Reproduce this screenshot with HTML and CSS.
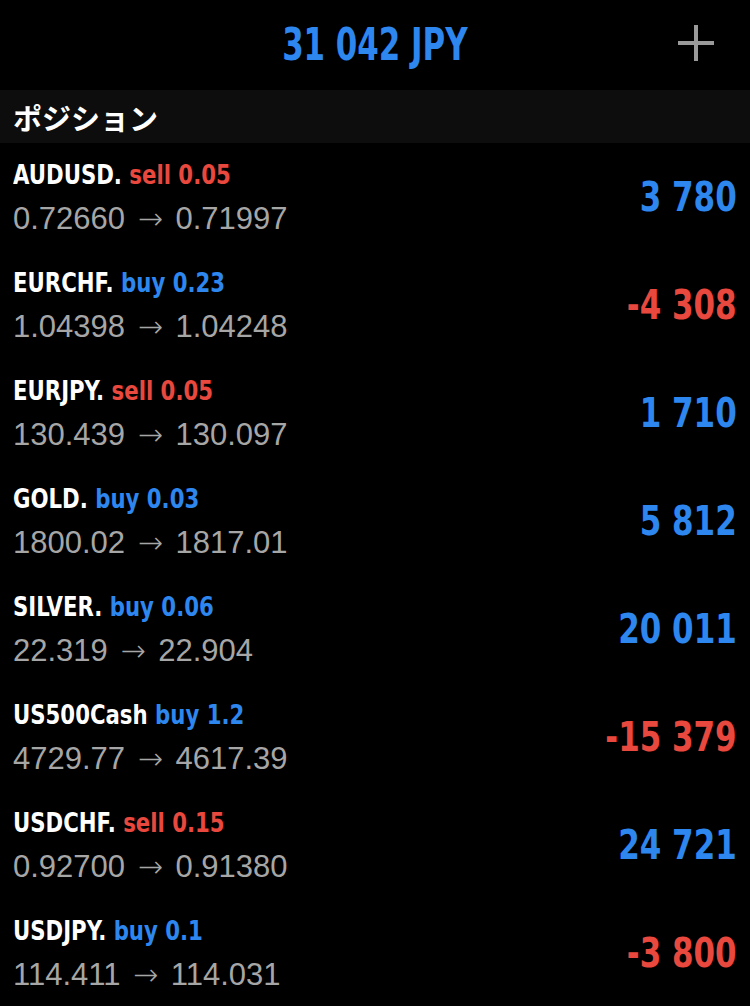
FILE: index.html
```html
<!DOCTYPE html>
<html lang="ja">
<head>
    <meta charset="UTF-8">
    <meta name="viewport" content="width=device-width, initial-scale=1.0">
    <title>ポジション</title>
    <link rel="stylesheet" href="styles.css">
</head>
<body>

    <div class="top-bar">
        <div class="balance">31 042 JPY</div>
        <button class="add-btn" aria-label="追加">
            <svg width="36" height="36" viewBox="0 0 36 36">
                <path d="M18 0 V36 M0 18 H36" stroke="#9a9a9a" stroke-width="4" fill="none"/>
            </svg>
        </button>
    </div>

    <div class="section-title">ポジション</div>

    <div class="positions">
        <div class="row">
            <div class="info">
                <div class="symbol"><span class="narrow">AUDUSD. <span class="sell">sell 0.05</span></span></div>
                <div class="prices">0.72660 <span class="arrow">→</span> 0.71997</div>
            </div>
            <div class="profit plus">3 780</div>
        </div>
        <div class="row">
            <div class="info">
                <div class="symbol"><span class="narrow">EURCHF. <span class="buy">buy 0.23</span></span></div>
                <div class="prices">1.04398 <span class="arrow">→</span> 1.04248</div>
            </div>
            <div class="profit minus">-4 308</div>
        </div>
        <div class="row">
            <div class="info">
                <div class="symbol"><span class="narrow">EURJPY. <span class="sell">sell 0.05</span></span></div>
                <div class="prices">130.439 <span class="arrow">→</span> 130.097</div>
            </div>
            <div class="profit plus">1 710</div>
        </div>
        <div class="row">
            <div class="info">
                <div class="symbol"><span class="narrow">GOLD. <span class="buy">buy 0.03</span></span></div>
                <div class="prices">1800.02 <span class="arrow">→</span> 1817.01</div>
            </div>
            <div class="profit plus">5 812</div>
        </div>
        <div class="row">
            <div class="info">
                <div class="symbol"><span class="narrow">SILVER. <span class="buy">buy 0.06</span></span></div>
                <div class="prices">22.319 <span class="arrow">→</span> 22.904</div>
            </div>
            <div class="profit plus">20 011</div>
        </div>
        <div class="row">
            <div class="info">
                <div class="symbol"><span class="narrow">US500Cash <span class="buy">buy 1.2</span></span></div>
                <div class="prices">4729.77 <span class="arrow">→</span> 4617.39</div>
            </div>
            <div class="profit minus">-15 379</div>
        </div>
        <div class="row">
            <div class="info">
                <div class="symbol"><span class="narrow">USDCHF. <span class="sell">sell 0.15</span></span></div>
                <div class="prices">0.92700 <span class="arrow">→</span> 0.91380</div>
            </div>
            <div class="profit plus">24 721</div>
        </div>
        <div class="row">
            <div class="info">
                <div class="symbol"><span class="narrow">USDJPY. <span class="buy">buy 0.1</span></span></div>
                <div class="prices">114.411 <span class="arrow">→</span> 114.031</div>
            </div>
            <div class="profit minus">-3 800</div>
        </div>
    </div>

</body>
</html>
```

FILE: styles.css
```css
body {
    margin: 0;
    padding: 0;
    background-color: #000;
    color: #fff;
    font-family: 'Liberation Sans', 'Noto Sans CJK JP', sans-serif;
    overflow: hidden;
}
.top-bar {
    height: 90px;
    display: flex;
    justify-content: center;
    align-items: center;
    position: relative;
}
.balance {
    color: #2d87ee;
    font-family: 'DejaVu Sans Condensed', 'Liberation Sans Narrow', sans-serif;
    font-stretch: condensed;
    font-weight: bold;
    font-size: 44px;
    transform: scaleX(0.78);
    margin-top: -2px;
}
.add-btn {
    position: absolute;
    right: 36px;
    top: 25px;
    width: 36px;
    height: 36px;
    padding: 0;
    border: none;
    background: none;
}
.add-btn svg {
    display: block;
}
.section-title {
    height: 53px;
    background-color: #0d0d0d;
    display: flex;
    align-items: center;
    padding-left: 13px;
    font-family: 'Noto Sans CJK JP', sans-serif;
    font-weight: bold;
    font-size: 29px;
}
.row {
    height: 108px;
    display: flex;
    justify-content: space-between;
    align-items: center;
    padding: 0 13px;
}
.info {
    display: flex;
    flex-direction: column;
    gap: 8px;
}
.symbol {
    height: 36px;
    line-height: 36px;
    font-family: 'DejaVu Sans Condensed', 'Liberation Sans Narrow', sans-serif;
    font-stretch: condensed;
    font-weight: bold;
    font-size: 27px;
    white-space: nowrap;
}
.narrow {
    display: inline-block;
    transform: scaleX(0.875);
    transform-origin: left center;
}
.prices {
    height: 36px;
    line-height: 36px;
    color: #a6a6a6;
    font-size: 31px;
    white-space: nowrap;
}
.arrow {
    font-family: 'DejaVu Sans', sans-serif;
    font-size: 30px;
    font-weight: 200;
    margin: 0 4px;
}
.profit {
    font-family: 'DejaVu Sans Condensed', 'Liberation Sans Narrow', sans-serif;
    font-stretch: condensed;
    font-weight: bold;
    font-size: 40px;
    transform: scaleX(0.86);
    transform-origin: right center;
}
.buy, .plus {
    color: #2d87ee;
}
.sell, .minus {
    color: #e8483d;
}
```
